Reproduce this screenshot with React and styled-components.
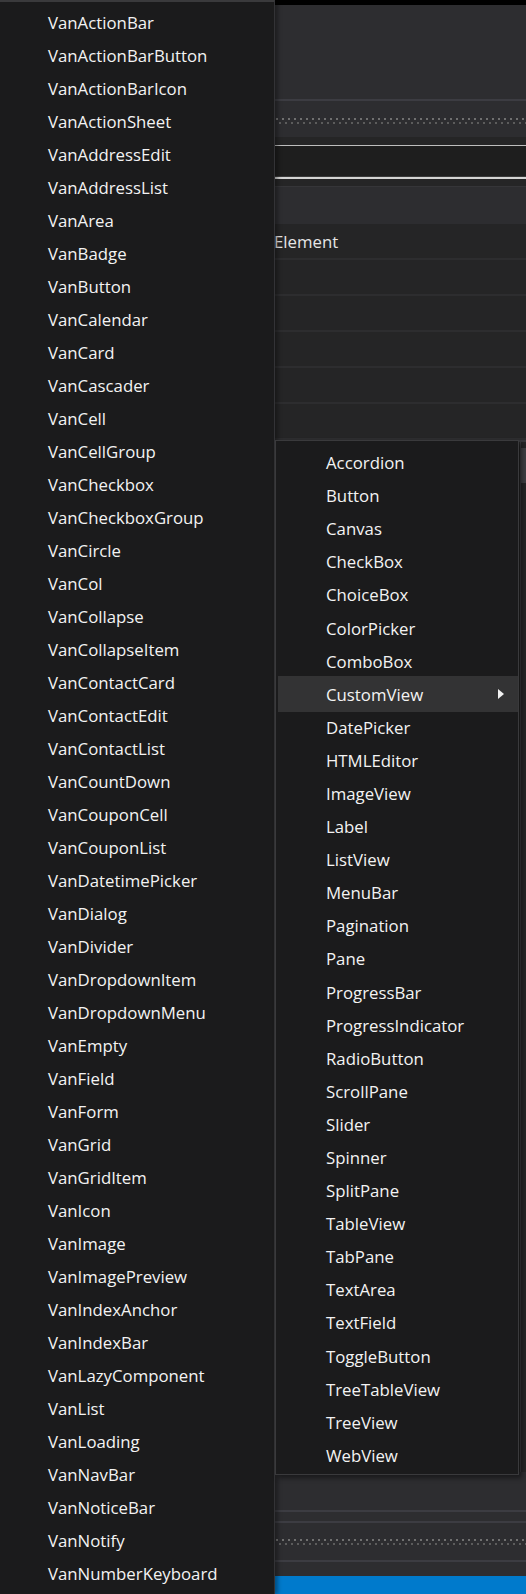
import styled, { createGlobalStyle } from 'styled-components';

const GlobalStyle = createGlobalStyle`
  html, body {
    margin: 0;
    padding: 0;
    background: #1b1b1c;
  }
  * {
    box-sizing: border-box;
  }
`;

const vantItems = [
  'VanActionBar', 'VanActionBarButton', 'VanActionBarIcon', 'VanActionSheet',
  'VanAddressEdit', 'VanAddressList', 'VanArea', 'VanBadge', 'VanButton',
  'VanCalendar', 'VanCard', 'VanCascader', 'VanCell', 'VanCellGroup',
  'VanCheckbox', 'VanCheckboxGroup', 'VanCircle', 'VanCol', 'VanCollapse',
  'VanCollapseItem', 'VanContactCard', 'VanContactEdit', 'VanContactList',
  'VanCountDown', 'VanCouponCell', 'VanCouponList', 'VanDatetimePicker',
  'VanDialog', 'VanDivider', 'VanDropdownItem', 'VanDropdownMenu', 'VanEmpty',
  'VanField', 'VanForm', 'VanGrid', 'VanGridItem', 'VanIcon', 'VanImage',
  'VanImagePreview', 'VanIndexAnchor', 'VanIndexBar', 'VanLazyComponent',
  'VanList', 'VanLoading', 'VanNavBar', 'VanNoticeBar', 'VanNotify',
  'VanNumberKeyboard',
];

const controlItems = [
  'Accordion', 'Button', 'Canvas', 'CheckBox', 'ChoiceBox', 'ColorPicker',
  'ComboBox', 'CustomView', 'DatePicker', 'HTMLEditor', 'ImageView', 'Label',
  'ListView', 'MenuBar', 'Pagination', 'Pane', 'ProgressBar',
  'ProgressIndicator', 'RadioButton', 'ScrollPane', 'Slider', 'Spinner',
  'SplitPane', 'TableView', 'TabPane', 'TextArea', 'TextField',
  'ToggleButton', 'TreeTableView', 'TreeView', 'WebView',
];

const Page = styled.div`
  position: relative;
  width: 526px;
  height: 1594px;
  overflow: hidden;
  font-family: 'Open Sans', 'Noto Sans', sans-serif;
`;

/* ---- IDE behind the menus ---- */

const Ide = styled.div`
  display: flex;
  flex-direction: column;
  height: 100%;
  background: #2d2d30;
`;

const TitleStrip = styled.div`
  height: 5px;
  background: #000;
`;

const ToolPanel = styled.div`
  height: ${p => p.$h}px;
  background: #2d2d30;
`;

const Rule = styled.div`
  height: ${p => p.$h || 2}px;
  background: ${p => p.$c || '#3c3c42'};
`;

const GripBar = styled.div`
  height: ${p => p.$h}px;
  display: flex;
  align-items: center;
  background: #2d2d30;
`;

const Grip = styled.div`
  flex: 1;
  height: 8px;
  margin-top: ${p => p.$offset || 0}px;
  background-image:
    radial-gradient(circle at 1px 1px, #707070 1px, transparent 1.3px),
    radial-gradient(circle at 1px 1px, #5c5c5c 1px, transparent 1.3px);
  background-size: 6px 8px, 6px 8px;
  background-position: 0 0, 3px 4px;
`;

const Gap = styled.div`
  height: ${p => p.$h}px;
  background: #252526;
`;

const SearchField = styled.div`
  height: 34px;
  background: #1e1e1e;
  border-top: 1px solid #bdbdbd;
  border-bottom: 2px solid #d4d4d4;
  box-shadow: inset 0 -1px 0 #3a3a3a;
`;

const HeaderRow = styled.div`
  height: 38px;
  background: #2d2d30;
  border-top: 1px solid #353538;
`;

const GridRow = styled.div`
  display: grid;
  grid-template-columns: 274px 1fr;
  align-items: center;
  height: 36px;
  background: #252526;
  border-bottom: 2px solid #2d2d2f;
  color: #e6e6e6;
  font-size: 16.8px;
`;

const ListPanel = styled.div`
  flex: 1;
  display: flex;
  background: #252526;
  border-top: 2px solid #38383c;
`;

const ListBody = styled.div`
  flex: 1;
`;

const ScrollTrack = styled.div`
  width: 6px;
  background: #252526;
  border-left: 1px solid #3a3a3e;
  padding-top: 6px;
`;

const ScrollThumb = styled.div`
  height: 35px;
  background: #3e3e42;
`;

const StatusBar = styled.div`
  height: 18px;
  background: #007acc;
`;

/* ---- context menus ---- */

const MainMenu = styled.ul`
  position: absolute;
  left: 0;
  top: 0;
  width: 275px;
  height: 1594px;
  margin: 0;
  padding: 3.5px 0 0;
  list-style: none;
  background: #1b1b1c;
  border-top: 2px solid #3a3a3c;
  border-right: 1px solid #333336;
  box-shadow: 3px 0 4px rgba(0, 0, 0, 0.35);
`;

const SubMenu = styled.ul`
  position: absolute;
  left: 275px;
  top: 440px;
  width: 244px;
  margin: 0;
  padding: 5px 0 2px;
  list-style: none;
  background: #1b1b1c;
  border: 1px solid #3a3a3c;
  box-shadow: 3px 3px 5px rgba(0, 0, 0, 0.45);
`;

const MenuItem = styled.li`
  display: flex;
  align-items: center;
  height: ${p => (p.$active ? p.$pitch + 3 : p.$pitch)}px;
  margin: ${p => (p.$active ? '-1.5px 0 -1.5px 2px' : '0')};
  padding-left: ${p => (p.$active ? p.$indent - 2 : p.$indent)}px;
  padding-right: 13px;
  background: ${p => (p.$active ? '#333334' : 'transparent')};
  color: #f3f3f3;
  font-size: 16.8px;
  white-space: nowrap;
`;

const ItemLabel = styled.span`
  flex: 1;
`;

const SubArrow = styled.svg`
  width: 7px;
  height: 10px;
  flex-shrink: 0;
`;

export default function App() {
  return (
    <Page>
      <GlobalStyle />
      <Ide>
        <TitleStrip />
        <ToolPanel $h={94} />
        <Rule $h={2} />
        <GripBar $h={36}>
          <Grip $offset={6} />
        </GripBar>
        <Gap $h={8} />
        <SearchField />
        <Gap $h={7} />
        <HeaderRow />
        <GridRow><span /><span>Element</span></GridRow>
        <GridRow />
        <GridRow />
        <GridRow />
        <GridRow />
        <GridRow />
        <ListPanel>
          <ListBody />
          <ScrollTrack>
            <ScrollThumb />
          </ScrollTrack>
        </ListPanel>
        <ToolPanel $h={38} />
        <Rule $h={2} />
        <ToolPanel $h={9} />
        <Rule $h={2} />
        <GripBar $h={37}>
          <Grip $offset={2} />
        </GripBar>
        <Rule $h={2} />
        <ToolPanel $h={14} />
        <StatusBar />
      </Ide>

      <MainMenu>
        {vantItems.map(name => (
          <MenuItem key={name} $indent={48} $pitch={33}>
            <ItemLabel>{name}</ItemLabel>
          </MenuItem>
        ))}
      </MainMenu>

      <SubMenu>
        {controlItems.map(name => (
          <MenuItem
            key={name}
            $indent={50}
            $pitch={33.1}
            $active={name === 'CustomView'}
          >
            <ItemLabel>{name}</ItemLabel>
            {name === 'CustomView' && (
              <SubArrow viewBox="0 0 7 10">
                <path d="M0 0 L6 5 L0 10 Z" fill="#f1f1f1" />
              </SubArrow>
            )}
          </MenuItem>
        ))}
      </SubMenu>
    </Page>
  );
}
